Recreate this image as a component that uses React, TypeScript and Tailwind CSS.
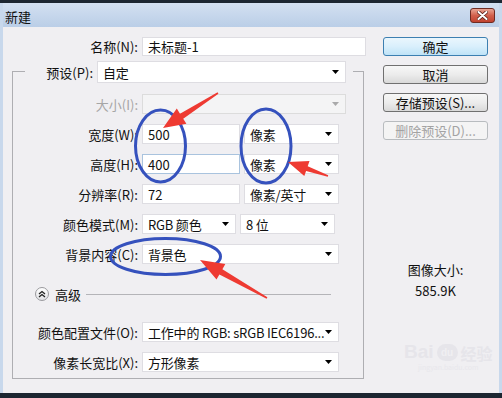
import React from 'react';

function Arrow() {
  return (
    <svg width="7" height="4" viewBox="0 0 7 4">
      <path d="M0 0h7L3.5 4z" fill="#000" />
    </svg>
  );
}

function Select({ text, w, h = 'h-[20px]', disabled }: { text?: string; w: string; h?: string; disabled?: boolean }) {
  return (
    <div
      className={`${w} ${h} flex items-center justify-between border pl-[5px] pr-[6px] ${
        disabled ? 'bg-[#f4f4f5] border-[#dcdcdc]' : 'bg-white border-[#dedde2]'
      }`}
    >
      <span className="whitespace-nowrap tracking-[-0.2px]">{text}</span>
      <span className={disabled ? 'opacity-30' : ''}>
        <Arrow />
      </span>
    </div>
  );
}

function Input({ text, w, h = 'h-[20px]', focus }: { text: string; w: string; h?: string; focus?: boolean }) {
  return (
    <div
      className={`${w} ${h} flex items-center bg-white border pl-[5px] ${focus ? 'border-[#a9c3de]' : 'border-[#dedde2]'}`}
    >
      {text}
    </div>
  );
}

function Row({ label, children, className = '', dim }: { label: string; children: React.ReactNode; className?: string; dim?: boolean }) {
  return (
    <div className={`flex items-center h-[20px] ${className}`}>
      <div className={`w-[125px] text-right ${dim ? 'text-[#a6a6a6]' : ''}`}>{label}</div>
      <div className="ml-[4px] flex gap-[4px]">{children}</div>
    </div>
  );
}

function Button({ label, kind }: { label: string; kind?: 'default' | 'disabled' }) {
  const cls =
    kind === 'default'
      ? 'border-[#3c7fb1] bg-linear-to-b from-[#eaf6fd] via-[#d9effc] to-[#bfe3f7]'
      : kind === 'disabled'
        ? 'border-[#b8bcbf] bg-[#f4f4f4] text-[#a3a3a3]'
        : 'border-[#707070] bg-linear-to-b from-[#f7f7f7] via-[#ececec] to-[#d9d9d9]';
  return (
    <div className={`h-[19px] w-[105px] rounded-[3px] border flex items-center justify-center ${cls}`}>{label}</div>
  );
}

function Annotations() {
  return (
    <svg className="absolute inset-0 pointer-events-none" width="502" height="398" viewBox="0 0 502 398">
      <g fill="none" stroke="#3551bd" strokeWidth="3">
        <ellipse cx="160.5" cy="146" rx="25" ry="36" />
        <ellipse cx="266" cy="146" rx="25" ry="37" />
        <ellipse cx="165.5" cy="256.5" rx="55" ry="18" />
      </g>
      <g fill="#ee3a32">
        <polygon points="218.4,93.7 183.2,118.7 186.4,123.8 163,128 176.8,108.6 180,113.7 217.6,92.3" />
        <polygon points="328.2,175.3 307.7,166.2 309.5,161.1 288,162 304.3,176.1 306.1,171 327.8,176.7" />
        <polygon points="267.4,297.3 222.4,269.2 225.3,264 200,260 216.5,279.6 219.4,274.4 266.6,298.7" />
      </g>
    </svg>
  );
}

export default function App() {
  return (
    <div className="relative w-[502px] h-[398px] overflow-hidden flex flex-col bg-[#1c2631] text-[13px] leading-none text-[#111] font-['Noto_Sans_CJK_SC','Noto_Sans',sans-serif]">
      <div className="h-[3px]" />
      <div className="flex flex-col h-[390px] border-x-[3px] border-[#c8d8ec]">
        {/* title bar */}
        <div className="h-[24px] flex items-center justify-between pl-[2px] pr-[4px] bg-linear-to-b from-[#d3e0f1] to-[#bacee7]">
          <span className="pt-[2px]">新建</span>
          <div className="w-[25px] h-[15px] rounded-[3px] border border-[#6e2b22] bg-linear-to-b from-[#e8a493] via-[#d2604c] to-[#c0422f] flex items-center justify-center">
            <svg width="11" height="9" viewBox="0 0 11 9">
              <path d="M1.5 1l8 7M9.5 1l-8 7" stroke="#5a2018" strokeWidth="3.6" strokeLinecap="round" />
              <path d="M1.5 1l8 7M9.5 1l-8 7" stroke="#fff" strokeWidth="2" strokeLinecap="round" />
            </svg>
          </div>
        </div>

        {/* body */}
        <div className="flex-1 flex bg-[#f0eff2]">
          <div className="w-[369px] pt-[10px]">
            <div className="flex items-center h-[19px]">
              <div className="w-[135px] text-right">名称(N):</div>
              <div className="ml-[4px]">
                <Input text="未标题-1" w="w-[224px]" h="h-[19px]" />
              </div>
            </div>

            <div className="mt-[15px] ml-[9px] w-[352px] border border-[#aeaeb2] pb-[6px]">
              <div className="-mt-[11px] ml-[12px] w-[328px] flex items-center bg-[#f0eff2] pr-[7px]">
                <div className="w-[68px] text-right">预设(P):</div>
                <div className="ml-[4px]">
                  <Select text="自定" w="w-[249px]" h="h-[22px]" />
                </div>
              </div>

              <Row label="大小(I):" className="mt-[11px]" dim>
                <Select w="w-[204px]" disabled />
              </Row>
              <Row label="宽度(W):" className="mt-[10px]">
                <Input text="500" w="w-[98px]" />
                <Select text="像素" w="w-[95px]" />
              </Row>
              <Row label="高度(H):" className="mt-[10px]">
                <Input text="400" w="w-[98px]" focus />
                <Select text="像素" w="w-[95px]" />
              </Row>
              <Row label="分辨率(R):" className="mt-[10px]">
                <Input text="72" w="w-[98px]" />
                <Select text="像素/英寸" w="w-[95px]" />
              </Row>
              <Row label="颜色模式(M):" className="mt-[10px]">
                <Select text="RGB 颜色" w="w-[94px]" />
                <Select text="8 位" w="w-[95px]" />
              </Row>
              <Row label="背景内容(C):" className="mt-[10px]">
                <Select text="背景色" w="w-[197px]" />
              </Row>

              <div className="mt-[20px] h-[20px] flex items-center ml-[22px] mr-[32px]">
                <div className="w-[14px] h-[14px] rounded-full border border-[#9a9a9e] bg-linear-to-b from-white to-[#e2e2e6] flex items-center justify-center">
                  <svg width="8" height="8" viewBox="0 0 8 8">
                    <path d="M1 4l3-2.5L7 4M1 7l3-2.5L7 7" fill="none" stroke="#222" strokeWidth="1.3" />
                  </svg>
                </div>
                <span className="ml-[6px]">高级</span>
                <div className="ml-[5px] flex-1 h-px bg-[#b4b4b8]" />
              </div>

              <Row label="颜色配置文件(O):" className="mt-[18px]">
                <Select text="工作中的 RGB: sRGB IEC6196..." w="w-[197px]" />
              </Row>
              <Row label="像素长宽比(X):" className="mt-[10px]">
                <Select text="方形像素" w="w-[197px]" />
              </Row>
            </div>
          </div>

          <div className="ml-[11px] w-[105px] pt-[10px] flex flex-col">
            <div className="flex flex-col gap-[9px]">
              <Button label="确定" kind="default" />
              <Button label="取消" />
              <Button label="存储预设(S)..." />
              <Button label="删除预设(D)..." kind="disabled" />
            </div>
            <div className="mt-[123px] text-center">图像大小:</div>
            <div className="mt-[8px] text-center">585.9K</div>
          </div>
        </div>
      </div>

      {/* watermark */}
      <div className="absolute left-[404px] top-[342px] flex flex-col items-center text-[#e6e5ea] pointer-events-none">
        <div className="flex items-end gap-[3px] font-['Liberation_Sans',sans-serif] font-bold text-[19px]">
          <span>Bai</span>
          <span className="w-[21px] h-[17px] rounded-full bg-[#e6e5ea] text-[#f0eff2] text-[10px] flex items-center justify-center">du</span>
          <span className="font-['Noto_Sans_CJK_SC',sans-serif] text-[16px]">经验</span>
        </div>
        <div className="text-[7px] mt-[3px] text-[#e8e7ec]">jingyan.baidu.com</div>
      </div>

      <Annotations />
    </div>
  );
}
